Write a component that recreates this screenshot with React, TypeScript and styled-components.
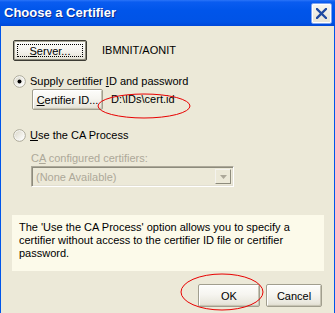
import React from "react";
import styled, { createGlobalStyle } from "styled-components";

const Global = createGlobalStyle`
  html, body { margin: 0; padding: 0; background: #ECE9D8; }
  body { font-family: "Liberation Sans", Arial, sans-serif; font-size: 11px; color: #000; }
`;

const Window = styled.div`
  position: relative;
  width: 335px;
  height: 313px;
  display: flex;
  flex-direction: column;
  overflow: hidden;
`;

const TitleBar = styled.div`
  height: 26px;
  flex: none;
  display: flex;
  align-items: center;
  padding: 0 3px 0 4px;
  box-sizing: border-box;
  background: linear-gradient(#2a74f8 0%, #0a5cf0 8%, #0055ea 40%, #0053e6 85%, #0048d8 100%);
`;

const Title = styled.div`
  flex: 1;
  color: #fff;
  font: bold 13px "Liberation Sans", Arial, sans-serif;
  text-shadow: 1px 1px #0a2a8a;
  padding-bottom: 1px;
`;

const CloseButton = styled.div`
  width: 21px;
  height: 21px;
  box-sizing: border-box;
  margin-top: 1px;
  border: 1px solid #7fa3ee;
  box-shadow: inset 0 0 0 1px #ffffff;
  border-radius: 2px;
  background: linear-gradient(#f7f6f0, #e6e3d6);
  display: flex;
  align-items: center;
  justify-content: center;
`;

const Body = styled.div`
  flex: 1;
  position: relative;
  background: #ECE9D8;
  border-left: 1px solid #0055ea;
  border-right: 1px solid #0055ea;
  padding: 0 11px;
  display: flex;
  flex-direction: column;
`;

const Row = styled.div<{ $top: number; $indent: number; $h?: number }>`
  display: flex;
  align-items: center;
  margin-top: ${(p) => p.$top}px;
  padding-left: ${(p) => p.$indent}px;
  height: ${(p) => p.$h ?? 13}px;
`;

const Button = styled.div<{ $w: number; $h?: number; $focus?: boolean }>`
  width: ${(p) => p.$w}px;
  height: ${(p) => p.$h ?? 21}px;
  box-sizing: border-box;
  flex: none;
  display: flex;
  align-items: center;
  justify-content: center;
  position: relative;
  border: 1px solid ${(p) => (p.$focus ? "#3c3b34" : "#a19e8e")};
  border-radius: 2px;
  background: linear-gradient(#fdfdfb 0%, #f6f5f0 45%, #e9e7dd 85%, #dedbcd 100%);
  box-shadow: ${(p) =>
    p.$focus
      ? "inset 1px 1px #a8a695, inset -1px -1px #8d8b7c"
      : "inset 1px 1px #ffffff, inset -1px -1px #c7c4b4"};
  font-size: 11px;
  color: #000;
  &::after {
    content: "";
    display: ${(p) => (p.$focus ? "block" : "none")};
    position: absolute;
    inset: 3px;
    border: 1px dotted #000;
  }
`;

const Key = styled.span`
  text-decoration: underline;
  text-underline-offset: 1px;
`;

const Label = styled.span<{ $gap?: number; $disabled?: boolean }>`
  margin-left: ${(p) => p.$gap ?? 0}px;
  color: ${(p) => (p.$disabled ? "#aca899" : "#000")};
  white-space: nowrap;
  line-height: 13px;
`;

const RadioBox = styled.svg`
  flex: none;
  width: 13px;
  height: 13px;
`;

const Combo = styled.div`
  margin-top: 1px;
  margin-left: 19px;
  width: 203px;
  height: 21px;
  box-sizing: border-box;
  border: 1px solid;
  border-color: #aca899 #ffffff #ffffff #aca899;
  box-shadow: inset 1px 1px #8d8b7c, inset -1px -1px #e2dfd2;
  display: flex;
  align-items: center;
  padding: 2px 2px 2px 4px;
  color: #aca899;
`;

const ComboText = styled.span`
  flex: 1;
`;

const DropButton = styled.div`
  width: 16px;
  height: 15px;
  box-sizing: border-box;
  border: 1px solid;
  border-color: #f4f3ee #8d8b7c #8d8b7c #f4f3ee;
  background: #ece9d8;
  display: flex;
  align-items: center;
  justify-content: center;
`;

const InfoPanel = styled.div`
  margin-top: 28px;
  width: 312px;
  height: 56px;
  box-sizing: border-box;
  background: #fcfaea;
  padding: 6px 6px 0 7px;
  line-height: 13px;
  font-size: 11px;
`;

const Footer = styled.div`
  margin-top: 13px;
  display: flex;
  justify-content: flex-end;
  gap: 6px;
  padding-right: 1px;
`;

const Annotation = styled.svg`
  position: absolute;
  left: 0;
  top: 0;
  width: 335px;
  height: 313px;
  pointer-events: none;
`;

function Radio({ checked }: { checked?: boolean }) {
  return (
    <RadioBox viewBox="0 0 13 13">
      <defs>
        <linearGradient id={checked ? "rg1" : "rg2"} x1="0" y1="0" x2="1" y2="1">
          <stop offset="0" stopColor="#dcd9cb" />
          <stop offset="1" stopColor="#ffffff" />
        </linearGradient>
      </defs>
      <circle cx="6.5" cy="6.5" r="5.8" fill="#fff" stroke="#a8a595" strokeWidth="1" />
      <circle cx="6.5" cy="6.5" r="4.6" fill={`url(#${checked ? "rg1" : "rg2"})`} />
      {checked && <circle cx="6.5" cy="6.5" r="2" fill="#000" />}
    </RadioBox>
  );
}

export default function App() {
  return (
    <>
      <Global />
      <Window>
        <TitleBar>
          <Title>Choose a Certifier</Title>
          <CloseButton>
            <svg width="11" height="11" viewBox="0 0 11 11">
              <path d="M1 1 L10 10 M10 1 L1 10" stroke="#1f4aa0" strokeWidth="2.3" strokeLinecap="square" />
            </svg>
          </CloseButton>
        </TitleBar>
        <Body>
          <Row $top={14} $indent={1} $h={21}>
            <Button $w={74} $focus>
              <span>
                <Key>S</Key>erver...
              </span>
            </Button>
            <Label $gap={15}>IBMNIT/AONIT</Label>
          </Row>
          <Row $top={14} $indent={1}>
            <Radio checked />
            <Label $gap={4}>
              Supply certifier <Key>I</Key>D and password
            </Label>
          </Row>
          <Row $top={1} $indent={20} $h={21}>
            <Button $w={71}>
              <span>
                <Key>C</Key>ertifier ID...
              </span>
            </Button>
            <Label $gap={8}>D:\IDs\cert.id</Label>
          </Row>
          <Row $top={19} $indent={1}>
            <Radio />
            <Label $gap={4}>
              <Key>U</Key>se the CA Process
            </Label>
          </Row>
          <Row $top={10} $indent={19}>
            <Label $disabled>
              C<Key>A</Key> configured certifiers:
            </Label>
          </Row>
          <Combo>
            <ComboText>(None Available)</ComboText>
            <DropButton>
              <svg width="7" height="4" viewBox="0 0 7 4">
                <path d="M0 0 H7 L3.5 4 Z" fill="#aca899" />
              </svg>
            </DropButton>
          </Combo>
          <InfoPanel>
            The 'Use the CA Process' option allows you to specify a certifier without access to the certifier ID file or certifier password.
          </InfoPanel>
          <Footer>
            <Button $w={62} $h={23}>OK</Button>
            <Button $w={56} $h={23}>Cancel</Button>
          </Footer>
        </Body>
        <Annotation viewBox="0 0 335 313">
          <ellipse cx="144" cy="106" rx="46" ry="12" fill="none" stroke="#e80000" strokeWidth="1" />
          <ellipse cx="222" cy="292" rx="41" ry="18" fill="none" stroke="#e80000" strokeWidth="1" />
        </Annotation>
      </Window>
    </>
  );
}
